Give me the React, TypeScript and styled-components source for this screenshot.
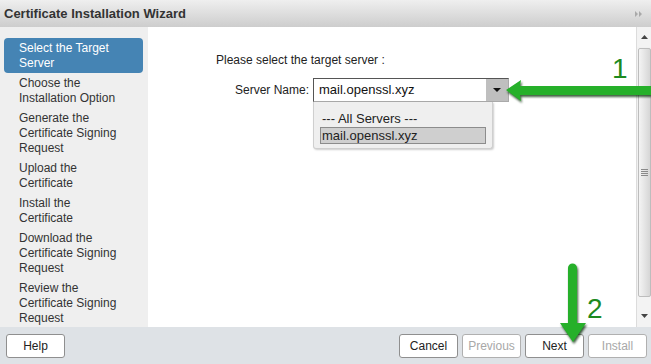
import React from "react";
import styled, { createGlobalStyle } from "styled-components";

const GlobalStyle = createGlobalStyle`
  html, body { margin: 0; padding: 0; background: #fff; }
  body { font-family: "Liberation Sans", Arial, sans-serif; font-size: 12px; color: #222; }
`;

const steps = [
  ["Select the Target", "Server"],
  ["Choose the", "Installation Option"],
  ["Generate the", "Certificate Signing", "Request"],
  ["Upload the", "Certificate"],
  ["Install the", "Certificate"],
  ["Download the", "Certificate Signing", "Request"],
  ["Review the", "Certificate Signing", "Request"],
];

const footerButtons = [
  { label: "Cancel", disabled: false },
  { label: "Previous", disabled: true },
  { label: "Next", disabled: false },
  { label: "Install", disabled: true },
];

function App() {
  return (
    <>
      <GlobalStyle />
      <Wizard>
        <Header>
          <Title>Certificate Installation Wizard</Title>
          <CollapseIcon width="10" height="8" viewBox="0 0 10 8">
            <path d="M1 1 L4 4 L1 7 Z M5 1 L8 4 L5 7 Z" fill="#a9a9a9" />
          </CollapseIcon>
        </Header>

        <Body>
          <Sidebar>
            {steps.map((lines, i) => (
              <Step key={i} active={i === 0}>
                {lines.map((l) => (
                  <div key={l}>{l}</div>
                ))}
              </Step>
            ))}
          </Sidebar>

          <Main>
            <Prompt>Please select the target server :</Prompt>
            <FormRow>
              <Label>Server Name:</Label>
              <SelectWrap>
                <SelectBox>
                  <SelectValue>mail.openssl.xyz</SelectValue>
                  <SelectButton>
                    <svg width="8" height="5" viewBox="0 0 8 5">
                      <path d="M0 0 L8 0 L4 4 Z" fill="#111" />
                    </svg>
                  </SelectButton>
                </SelectBox>
                <DropList>
                  <DropItem>--- All Servers ---</DropItem>
                  <DropItem selected>mail.openssl.xyz</DropItem>
                </DropList>
              </SelectWrap>
            </FormRow>
          </Main>

          <Scrollbar>
            <ScrollArrow>
              <svg width="7" height="4" viewBox="0 0 7 4">
                <path d="M0 4 L7 4 L3.5 0 Z" fill="#444" />
              </svg>
            </ScrollArrow>
            <Thumb>
              <Grip />
            </Thumb>
            <ScrollArrow bottom>
              <svg width="7" height="4" viewBox="0 0 7 4">
                <path d="M0 0 L7 0 L3.5 4 Z" fill="#444" />
              </svg>
            </ScrollArrow>
          </Scrollbar>
        </Body>

        <Footer>
          <Button>Help</Button>
          <ButtonGroup>
            {footerButtons.map((b) => (
              <Button key={b.label} disabled={b.disabled}>
                {b.label}
              </Button>
            ))}
          </ButtonGroup>
        </Footer>

        {/* annotation overlay */}
        <Annotations width="651" height="364" viewBox="0 0 651 364">
          <g fill="#26b02a" style={{ filter: "drop-shadow(1.5px 2px 1px rgba(0,40,0,0.75))" }}>
            <polygon points="506,90 521,80 520,86 651,86 651,95 520,95 521,101" />
            <path d="M568,268 a4.5,4.5 0 0 1 9,0 L577,323 L586,323 L573,342 L560,323 L568,323 Z" />
          </g>
          <Digit x="612" y="78">1</Digit>
          <Digit x="587" y="318">2</Digit>
        </Annotations>
      </Wizard>
    </>
  );
}

export default App;

const Wizard = styled.div`
  position: relative;
  width: 651px;
  height: 364px;
  display: flex;
  flex-direction: column;
  overflow: hidden;
`;

const Header = styled.div`
  height: 27px;
  flex: none;
  display: flex;
  align-items: center;
  justify-content: space-between;
  padding: 0 7px 0 4px;
  box-sizing: border-box;
  background: linear-gradient(#efefef, #cdcdcd);
`;

const Title = styled.div`
  font-family: "Liberation Sans Narrow", "Liberation Sans", Arial, sans-serif;
  font-weight: bold;
  font-size: 13px;
  color: #333;
`;

const CollapseIcon = styled.svg`
  display: block;
`;

const Body = styled.div`
  flex: 1;
  display: flex;
  min-height: 0;
`;

const Sidebar = styled.div`
  width: 148px;
  flex: none;
  background: #efefef;
  padding: 11px 5px 0 4px;
  box-sizing: border-box;
`;

const Step = styled.div<{ active?: boolean }>`
  padding: 3px 4px 2px 15px;
  line-height: 15px;
  font-size: 12px;
  border-radius: 4px;
  color: ${({ active }) => (active ? "#fff" : "#333")};
  background: ${({ active }) => (active ? "#4584b4" : "transparent")};
`;

const Main = styled.div`
  flex: 1;
  background: #fff;
  padding: 26px 0 0 68px;
  box-sizing: border-box;
`;

const Prompt = styled.div`
  line-height: 15px;
  font-size: 12px;
  color: #222;
`;

const FormRow = styled.div`
  display: flex;
  align-items: center;
  margin-top: 10px;
  padding-left: 19px;
`;

const Label = styled.div`
  font-size: 12px;
  color: #222;
  margin-right: 4px;
`;

const SelectWrap = styled.div`
  position: relative;
`;

const SelectBox = styled.div`
  width: 196px;
  height: 24px;
  box-sizing: border-box;
  border: 1px solid #555;
  border-right-color: #aaa;
  border-bottom-color: #aaa;
  background: #fff;
  display: flex;
  align-items: stretch;
`;

const SelectValue = styled.div`
  flex: 1;
  font-size: 13px;
  line-height: 22px;
  padding-left: 5px;
  color: #111;
`;

const SelectButton = styled.div`
  width: 22px;
  background: #bfbfbf;
  display: flex;
  align-items: center;
  justify-content: center;
`;

const DropList = styled.div`
  position: absolute;
  top: 24px;
  left: 0;
  width: 180px;
  height: 47px;
  box-sizing: border-box;
  background: #efefef;
  border: 1px solid #cfcfcf;
  border-top: none;
  border-radius: 0 0 3px 3px;
  box-shadow: 1px 1px 2px rgba(0, 0, 0, 0.2);
  padding: 8px 6px 0 6px;
`;

const DropItem = styled.div<{ selected?: boolean }>`
  font-size: 13px;
  line-height: 15px;
  height: 15px;
  padding-left: 1px;
  color: #222;
  background: ${({ selected }) => (selected ? "#cfcfcf" : "transparent")};
  border: 1px solid ${({ selected }) => (selected ? "#8c8c8c" : "transparent")};
`;

const Scrollbar = styled.div`
  width: 15px;
  flex: none;
  display: flex;
  flex-direction: column;
  background: #f1f1f1;
  border-left: 1px solid #dcdcdc;
  box-sizing: border-box;
`;

const ScrollArrow = styled.div<{ bottom?: boolean }>`
  height: ${({ bottom }) => (bottom ? "30px" : "20px")};
  display: flex;
  justify-content: center;
  align-items: ${({ bottom }) => (bottom ? "flex-end" : "center")};
  padding-bottom: ${({ bottom }) => (bottom ? "9px" : "0")};
  box-sizing: border-box;
  background: #f3f3f3;
`;

const Thumb = styled.div`
  flex: 1;
  margin: 1px 0 0 1px;
  border: 1px solid #bdbdbd;
  border-radius: 2px;
  background: linear-gradient(to right, #f4f4f4, #d6d6d6);
  display: flex;
  align-items: center;
  justify-content: center;
`;

const Grip = styled.div`
  width: 7px;
  height: 7px;
  background: repeating-linear-gradient(#8a8a8a 0 1px, transparent 1px 2px);
`;

const Footer = styled.div`
  height: 37px;
  flex: none;
  background: #dee2e6;
  display: flex;
  align-items: center;
  justify-content: space-between;
  padding: 0 4px 0 6px;
  box-sizing: border-box;
`;

const ButtonGroup = styled.div`
  display: flex;
  gap: 4px;
`;

const Button = styled.button`
  width: 59px;
  height: 24px;
  padding: 0;
  font-family: "Liberation Sans", Arial, sans-serif;
  font-size: 12px;
  background: #fff;
  border: 1px solid #8f8f8f;
  border-radius: 3px;
  color: #222;
  &:disabled {
    color: #a8a8a8;
    border-color: #b0b0b0;
  }
`;

const Annotations = styled.svg`
  position: absolute;
  top: 0;
  left: 0;
  pointer-events: none;
`;

const Digit = styled.text`
  font-family: "Liberation Sans", Arial, sans-serif;
  font-size: 28px;
  fill: #1d8a1f;
`;
